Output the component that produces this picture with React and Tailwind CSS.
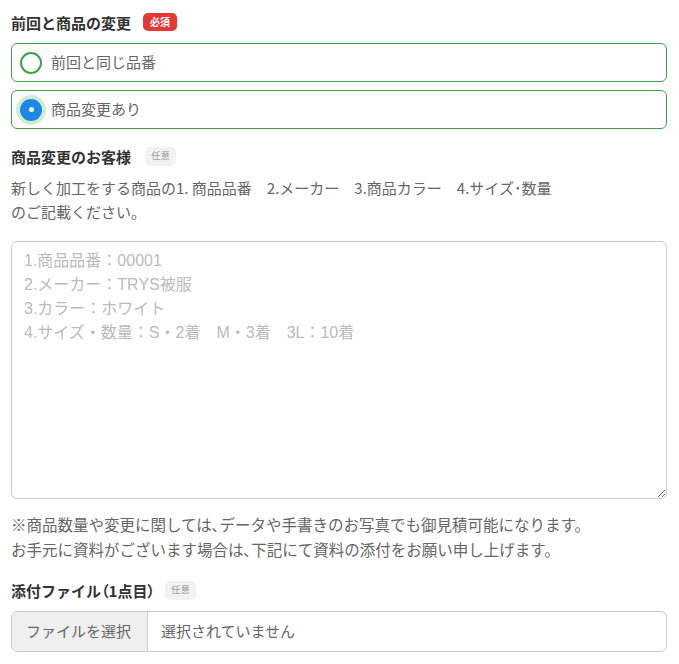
import React from "react";

const jp = "font-['Noto_Sans_CJK_JP',sans-serif]";

function Required() {
  return (
    <span className="ml-[12px] inline-flex h-[18px] items-center rounded-[5px] bg-[#e53935] px-[7px] text-[10px] font-bold leading-none text-white">
      必須
    </span>
  );
}

function Optional({ gap = "ml-[14px]" }) {
  return (
    <span className={`${gap} inline-flex h-[19px] items-center rounded-[5px] bg-[#f2f2f2] px-[6px] text-[9.5px] leading-none text-[#999]`}>
      任意
    </span>
  );
}

function Heading({ children, badge }) {
  return (
    <div className="flex h-[20px] items-center">
      <span className="text-[15px] font-bold leading-none text-[#333]">
        {children}
      </span>
      {badge}
    </div>
  );
}

function RadioRow({ label, checked }) {
  return (
    <label className="flex h-[39px] items-center rounded-[6px] border border-[#43a047] bg-white pl-[8px]">
      {checked ? (
        <span className="flex h-[22px] w-[22px] items-center justify-center rounded-full bg-[#1e88e5] ring-4 ring-[#d3ead4]">
          <span className="h-[5px] w-[5px] rounded-full bg-white" />
        </span>
      ) : (
        <span className="h-[22px] w-[22px] rounded-full border-2 border-[#43a047] bg-white" />
      )}
      <span className="ml-[9px] text-[15px] text-[#666]">{label}</span>
    </label>
  );
}

const placeholder =
  "1.商品品番：00001\n2.メーカー：TRYS被服\n3.カラー：ホワイト\n4.サイズ・数量：S・2着　M・3着　3L：10着";

export default function App() {
  return (
    <div className={`${jp} min-h-[664px] w-[679px] bg-white pl-[11px] pr-[12px]`}>
      <div className="pt-[12px]">
        <Heading badge={<Required />}>前回と商品の変更</Heading>
      </div>
      <div className="mt-[11px] flex flex-col gap-[8px]">
        <RadioRow label="前回と同じ品番" />
        <RadioRow label="商品変更あり" checked />
      </div>

      <div className="mt-[17px]">
        <Heading badge={<Optional />}>商品変更のお客様</Heading>
      </div>
      <p className="mt-[10px] text-[15px] leading-[24px] text-[#666]">
        新しく加工をする商品の1. 商品品番　2.メーカー　3.商品カラー　4.サイズ･数量
        <br />
        のご記載ください。
      </p>

      <textarea
        className="mt-[17px] block h-[258px] w-full rounded-[6px] border border-[#ccc] bg-white px-[12px] pt-[7px] font-['Liberation_Sans','Noto_Sans_CJK_JP',sans-serif] text-[16px] leading-[24px] text-[#333] outline-none placeholder:text-[#bbb]"
        placeholder={placeholder}
      />

      <p className="mt-[13px] text-[15.5px] leading-[25px] text-[#666]">
        ※商品数量や変更に関しては､データや手書きのお写真でも御見積可能になります。
        <br />
        お手元に資料がございます場合は､下記にて資料の添付をお願い申し上げます。
      </p>

      <div className="mt-[18px]">
        <Heading badge={<Optional gap="ml-[10px]" />}>
          添付ファイル
          <span className="[font-feature-settings:'palt']">（</span>1点目
          <span className="[font-feature-settings:'palt']">）</span>
        </Heading>
      </div>
      <div className="mt-[11px] flex h-[41px] overflow-hidden rounded-[6px] border border-[#ccc] bg-white">
        <div className="flex w-[136px] items-center border-r border-[#ccc] bg-[#efefef] pl-[14px] text-[15px] text-[#666]">
          ファイルを選択
        </div>
        <div className="flex items-center pl-[13px] text-[15px] text-[#666]">
          選択されていません
        </div>
      </div>
    </div>
  );
}
